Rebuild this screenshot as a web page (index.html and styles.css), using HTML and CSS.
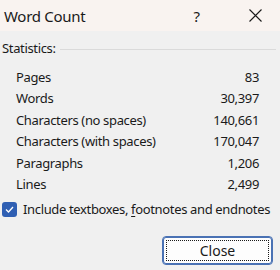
FILE: index.html
```html
<!DOCTYPE html>
<html lang="en">
<head>
    <meta charset="UTF-8">
    <title>Word Count</title>
    <link rel="stylesheet" href="styles.css">
</head>
<body>
    <div class="dialog">
        <div class="titlebar">
            <span class="title">Word Count</span>
            <span class="help">?</span>
            <svg class="close-x" width="13" height="13" viewBox="0 0 13 13">
                <path d="M0.5 0.5 L12.5 12.5 M12.5 0.5 L0.5 12.5" stroke="#1a1a1a" stroke-width="1.1" fill="none"/>
            </svg>
        </div>

        <div class="content">
            <div class="group-head">
                <span>Statistics:</span>
                <div class="rule"></div>
            </div>

            <div class="stats">
                <div class="row"><span>Pages</span><span>83</span></div>
                <div class="row"><span>Words</span><span>30,397</span></div>
                <div class="row"><span>Characters (no spaces)</span><span>140,661</span></div>
                <div class="row"><span>Characters (with spaces)</span><span>170,047</span></div>
                <div class="row"><span>Paragraphs</span><span>1,206</span></div>
                <div class="row"><span>Lines</span><span>2,499</span></div>
            </div>

            <label class="check">
                <span class="box">
                    <svg width="15" height="15" viewBox="0 0 15 15">
                        <path d="M4 7.5 L6.5 10 L11 5" stroke="#fff" stroke-width="1.3" fill="none"/>
                    </svg>
                </span>
                <span class="check-label">Include textboxes, <u>f</u>ootnotes and endnotes</span>
            </label>

            <div class="actions">
                <button class="button">Close</button>
            </div>
        </div>
    </div>
</body>
</html>
```

FILE: styles.css
```css
body {
    margin: 0;
    padding: 0;
    background: #f0f0f0;
    font-family: 'Noto Sans', 'Open Sans', sans-serif;
    color: #1a1a1a;
}
.dialog {
    width: 280px;
    height: 270px;
    display: flex;
    flex-direction: column;
}
.titlebar {
    height: 31px;
    flex-shrink: 0;
    background: #f9f3f0;
    display: flex;
    align-items: center;
    padding-left: 4px;
}
.title {
    font-size: 15px;
    letter-spacing: -0.3px;
    flex: 1;
}
.help {
    font-size: 15px;
    margin-right: 49px;
}
.close-x {
    margin-right: 18px;
}
.content {
    padding: 0 4px 0 2px;
    font-size: 13px;
    letter-spacing: -0.35px;
}
.group-head {
    display: flex;
    align-items: center;
    margin-top: 8px;
    height: 18px;
}
.rule {
    flex: 1;
    height: 1px;
    background: #dadada;
    margin-left: 4px;
    margin-top: 2px;
}
.stats {
    padding: 10px 17px 0 14px;
}
.row {
    display: flex;
    justify-content: space-between;
    line-height: 21.4px;
}
.check {
    display: flex;
    align-items: center;
    gap: 6px;
    height: 18px;
    margin-top: 5px;
}
.box {
    width: 15px;
    height: 15px;
    flex-shrink: 0;
    background: #2f5fb3;
    border-radius: 3px;
    display: flex;
}
.check-label {
    white-space: nowrap;
}
.check u {
    text-decoration-thickness: 1px;
    text-underline-offset: 2px;
}
.actions {
    display: flex;
    justify-content: flex-end;
    margin-top: 18px;
    padding-right: 3px;
}
.button {
    width: 111px;
    height: 29px;
    background: #fdfdfd;
    border: 1px solid #4a72b4;
    border-radius: 4px;
    box-shadow: inset 0 0 0 1px #4a72b4;
    outline: 1px dotted #1a1a1a;
    outline-offset: -5px;
    font-family: 'Noto Sans', 'Open Sans', sans-serif;
    font-size: 14px;
    color: #1a1a1a;
    padding: 0;
}
```
